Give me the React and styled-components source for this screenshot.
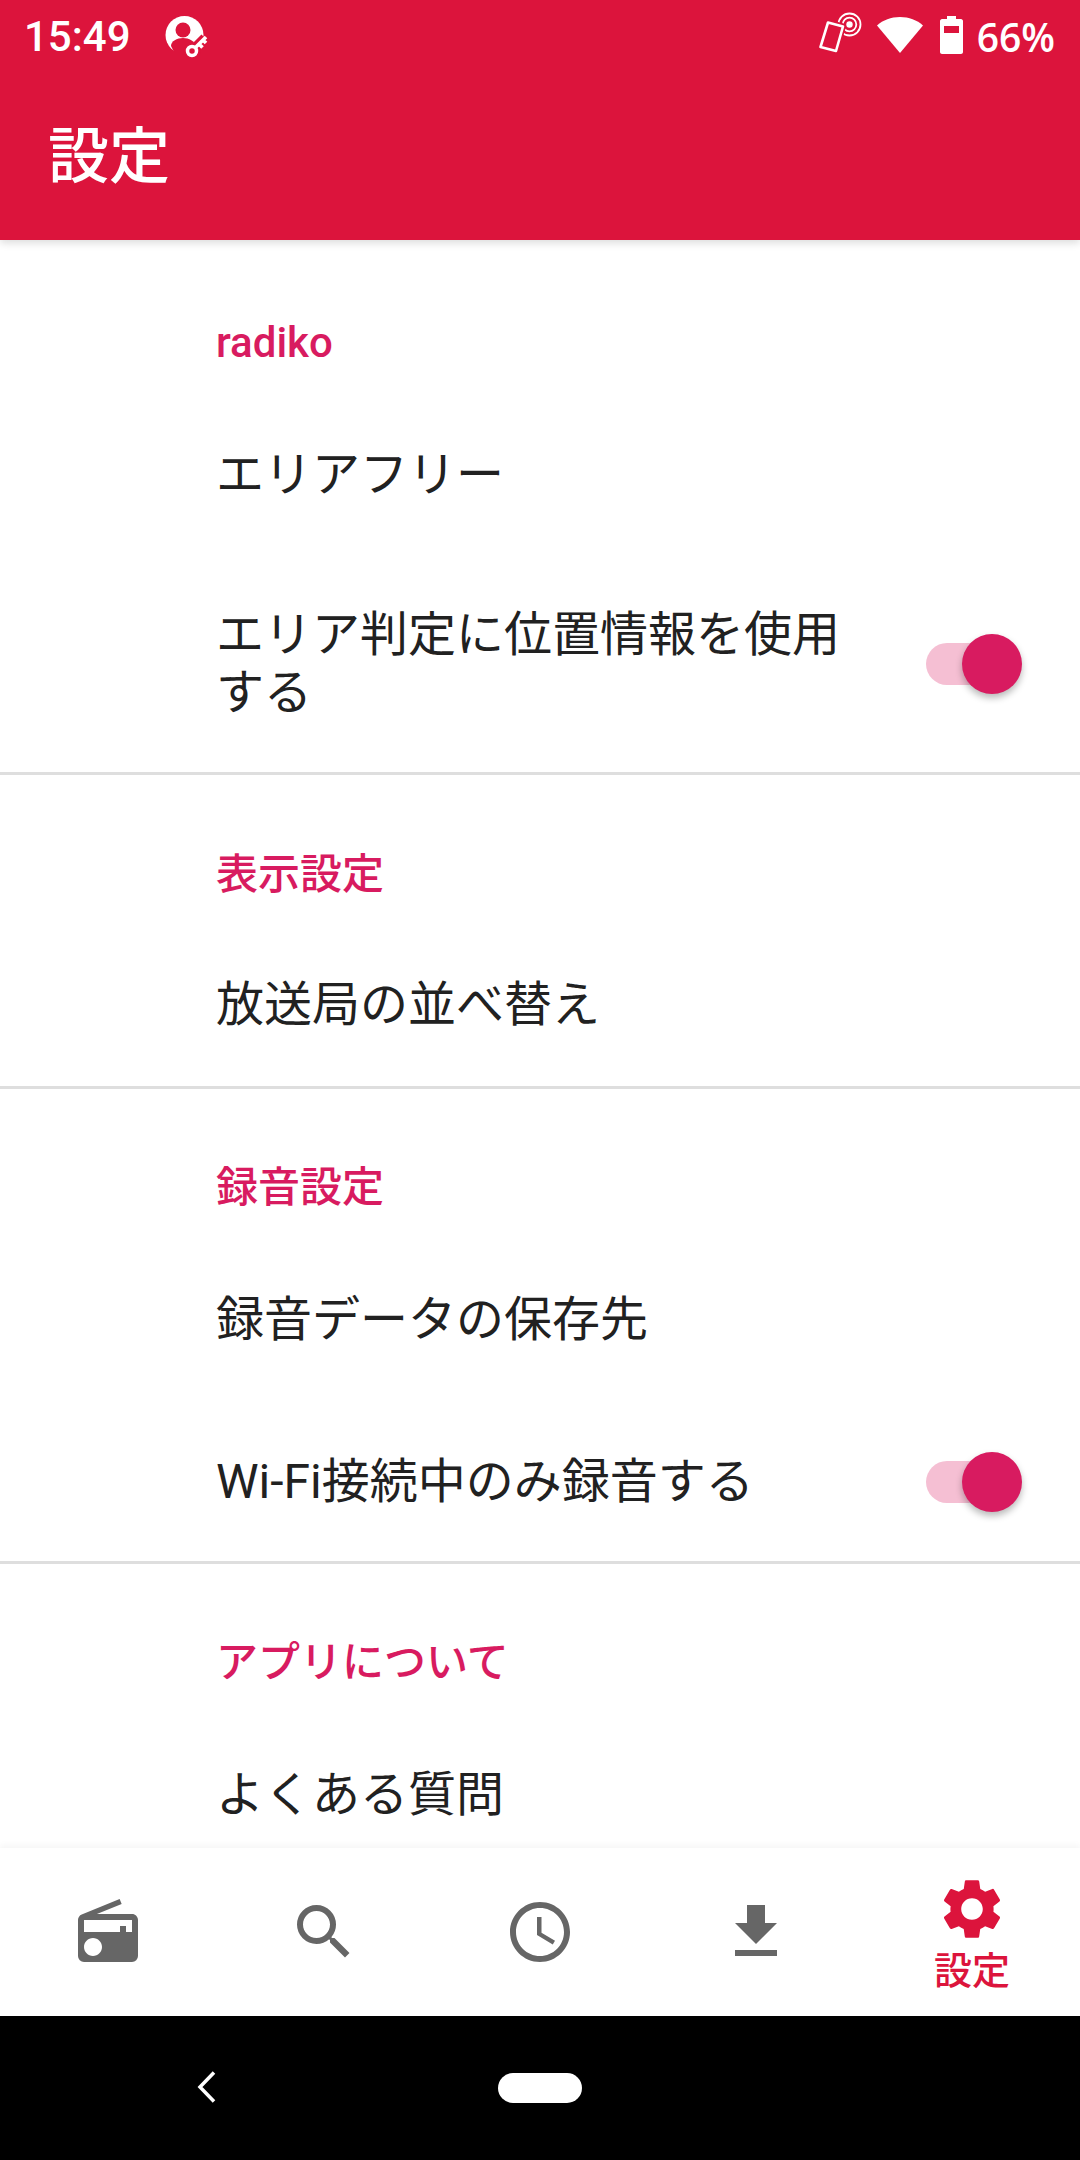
import React from 'react';
import styled, { createGlobalStyle } from 'styled-components';
import { MdRadio, MdSearch, MdAccessTime, MdFileDownload, MdSettings } from 'react-icons/md';

const Global = createGlobalStyle`
  html, body { margin: 0; padding: 0; background: #fff; }
  * { box-sizing: border-box; }
`;
const FONT = `Roboto, "Noto Sans CJK JP", sans-serif`;
const CRIMSON = '#dc143c';
const PINK = '#d81b60';

const Screen = styled.div`
  width: 1080px; height: 2160px; display: flex; flex-direction: column;
  overflow: hidden; background: #fff; font-family: ${FONT};
`;
const Header = styled.header`
  height: 240px; flex: none; background: ${CRIMSON}; color: #fff;
  position: relative; z-index: 2; box-shadow: 0 3px 8px rgba(0,0,0,.14);
`;
const StatusBar = styled.div`
  height: 74px; display: flex; align-items: center; padding: 0 25px 0 24px;
`;
const Clock = styled.span`
  font-size: 42px; font-weight: 500; line-height: 74px; width: 131px;
`;
const Spacer = styled.div`flex: 1;`;
const StatusIcons = styled.div`
  display: flex; align-items: center; gap: 17px;
`;
const Percent = styled.span`
  font-family: "Open Sans", sans-serif; font-size: 39px; font-weight: 600; line-height: 74px; margin-left: -3px;
`;
const IconSvg = styled.svg`
  display: block; flex: none; margin-right: ${p => p.$mr || 0}px; margin-top: ${p => p.$mt || 0}px;
`;
const Title = styled.h1`
  margin: 0; padding: 0 0 0 48px; font-size: 61px; font-weight: 500; line-height: 84px;
  margin-top: 41px;
`;
const Content = styled.main`
  flex: 1; min-height: 0; overflow: hidden;
`;
const Section = styled.section`
  padding-top: ${p => p.$top}px;
  border-bottom: ${p => (p.$last ? 'none' : '3px solid #dedede')};
`;
const Category = styled.h2`
  margin: 0 0 ${p => p.$gap}px; padding-left: 216px; font-size: 42px; line-height: 54px; font-weight: 500; color: ${PINK};
`;
const Row = styled.div`
  height: ${p => p.$h}px; display: flex; align-items: center; padding: 0 58px 0 216px; gap: 86px;
`;
const RowText = styled.div`
  flex: 1; font-size: 48px; line-height: 58px; color: #212121;
`;
const Switch = styled.div`
  position: relative; width: 96px; height: 60px; flex: none;
`;
const Track = styled.div`
  position: absolute; left: 0; top: 9px; width: 84px; height: 42px; border-radius: 21px; background: #f5bfd3;
`;
const Thumb = styled.div`
  position: absolute; right: 0; top: 0; width: 60px; height: 60px; border-radius: 50%;
  background: ${PINK}; box-shadow: 0 4px 7px rgba(0,0,0,.28);
`;
const Nav = styled.nav`
  height: 168px; flex: none; display: grid; grid-template-columns: repeat(5, 216px);
  background: #fff; box-shadow: 0 -3px 6px rgba(0,0,0,.04); position: relative;
`;
const NavItem = styled.div`
  display: flex; flex-direction: column; align-items: center; justify-content: center;
  color: ${p => (p.$active ? CRIMSON : '#666')};
  svg { display: block; }
`;
const NavLabel = styled.span`
  font-size: 38px; line-height: 42px; font-weight: 500; margin-top: 5px; margin-bottom: 0;
`;
const SystemBar = styled.div`
  height: 144px; flex: none; background: #000; position: relative;
  display: flex; align-items: center; justify-content: center;
`;
const BackIcon = styled.svg`
  position: absolute; left: 196px; top: 54px;
`;
const HomePill = styled.div`
  width: 84px; height: 30px; border-radius: 15px; background: #fff;
`;

const KeyIcon = () => (
  <IconSvg width="60" height="55" viewBox="0 0 60 55" $mt={-2}>
    <circle cx="29.500" cy="26" r="19" fill="#fff" />
    <circle cx="28" cy="21" r="7.500" fill={CRIMSON} />
    <path fill={CRIMSON} d="M16 37c0-5 6-8 12-8s12 3 12 8l-4 8H20z" />
    <path d="M33 46L50 29" stroke={CRIMSON} strokeWidth="10" fill="none" />
    <circle cx="37" cy="42" r="8.500" fill={CRIMSON} />
    <circle cx="37" cy="42" r="4.500" fill="none" stroke="#fff" strokeWidth="3.500" />
    <path stroke="#fff" strokeWidth="3.600" d="M40 39L51 28M44 35l3.500 3.500M48 31l3 3" fill="none" />
  </IconSvg>
);
const NfcPhone = () => (
  <IconSvg width="60" height="55" viewBox="0 0 60 55" fill="none" stroke="#fff" $mr={-13} $mt={-4}>
    <circle cx="36.500" cy="16.500" r="3.200" fill="#fff" stroke="none" />
    <circle cx="36.500" cy="16.500" r="6.800" strokeWidth="1.800" />
    <circle cx="36.500" cy="16.500" r="11" strokeWidth="1.800" />
    <path d="M15 14.500L30 18.500L23 43L7.500 39Z" fill={CRIMSON} stroke={CRIMSON} strokeWidth="6" strokeLinejoin="round" />
    <path d="M15 14.500L30 18.500L23 43L7.500 39Z" strokeWidth="2.600" strokeLinejoin="round" fill={CRIMSON} />
  </IconSvg>
);
const Wifi = () => (
  <IconSvg width="46" height="38" viewBox="0 0 46 38" $mt={-4}><path fill="#fff" d="M23 37L0 9.500C6 4 14 1 23 1s17 3 23 8.500z" /></IconSvg>
);
const Battery = () => (
  <IconSvg width="23" height="38" viewBox="0 0 23 38" $mt={-4}>
    <path fill="#fff" fillRule="evenodd" d="M7 0h9v3h5c1 0 2 1 2 2v31c0 1-1 2-2 2H2c-1 0-2-1-2-2V5c0-1 1-2 2-2h5zM4 10v7h15v-7z" />
  </IconSvg>
);

export default function App() {
  return (
    <Screen>
      <Global />
      <Header>
        <StatusBar>
          <Clock>15:49</Clock>
          <KeyIcon />
          <Spacer />
          <StatusIcons>
            <NfcPhone />
            <Wifi />
            <Battery />
            <Percent>66%</Percent>
          </StatusIcons>
        </StatusBar>
        <Title>設定</Title>
      </Header>
      <Content>
        <Section $top={76}>
          <Category $gap={25}>radiko</Category>
          <Row $h={160}><RowText>エリアフリー</RowText></Row>
          <Row $h={217}>
            <RowText>エリア判定に位置情報を使用する</RowText>
            <Switch><Track /><Thumb /></Switch>
          </Row>
        </Section>
        <Section $top={73}>
          <Category $gap={22}>表示設定</Category>
          <Row $h={162}><RowText>放送局の並べ替え</RowText></Row>
        </Section>
        <Section $top={72}>
          <Category $gap={22}>録音設定</Category>
          <Row $h={166}><RowText>録音データの保存先</RowText></Row>
          <Row $h={158}>
            <RowText>Wi-Fi接続中のみ録音する</RowText>
            <Switch><Track /><Thumb /></Switch>
          </Row>
        </Section>
        <Section $top={72} $last>
          <Category $gap={23}>アプリについて</Category>
          <Row $h={164}><RowText>よくある質問</RowText></Row>
        </Section>
      </Content>
      <Nav>
        <NavItem><MdRadio size={72} /></NavItem>
        <NavItem><MdSearch size={72} /></NavItem>
        <NavItem><MdAccessTime size={72} /></NavItem>
        <NavItem><MdFileDownload size={72} /></NavItem>
        <NavItem $active><MdSettings size={72} /><NavLabel>設定</NavLabel></NavItem>
      </Nav>
      <SystemBar>
        <BackIcon width="24" height="34" viewBox="0 0 24 34">
          <path d="M18 2.500L4 17l14 14.500" fill="none" stroke="#fff" strokeWidth="3.500" />
        </BackIcon>
        <HomePill />
      </SystemBar>
    </Screen>
  );
}
